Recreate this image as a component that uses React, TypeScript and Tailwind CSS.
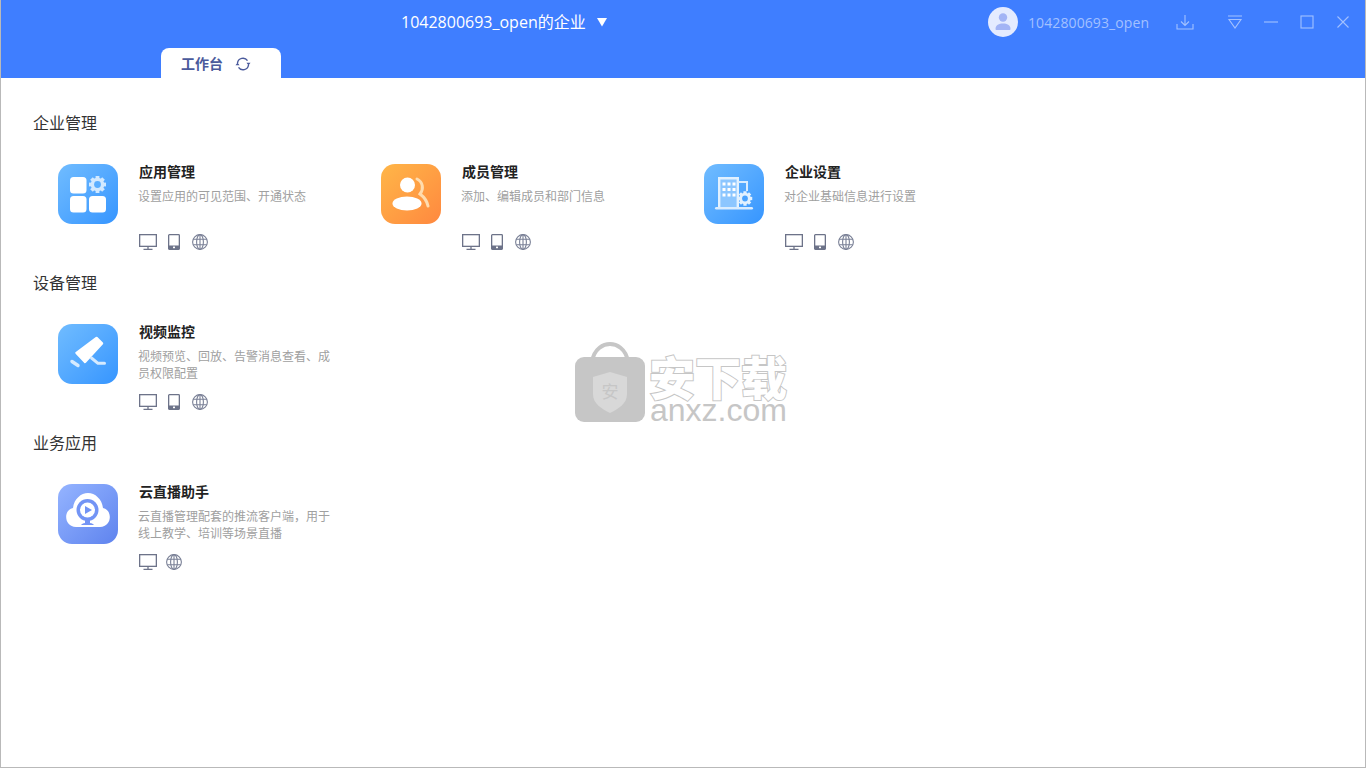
import React from "react";

const Monitor = () => (
  <svg width="18" height="16" viewBox="0 0 18 16" fill="none" stroke="#6d7389" strokeWidth="1.3">
    <rect x="0.65" y="0.65" width="16.7" height="11.7" />
    <path d="M9 12.5V15M4.500 15.350H13.500" />
  </svg>
);
const Tablet = () => (
  <svg className="ml-[11px]" width="12" height="16" viewBox="0 0 12 16" fill="none">
    <rect x="0.65" y="0.65" width="10.7" height="14.7" rx="0.8" stroke="#6d7389" strokeWidth="1.3" />
    <rect x="0.65" y="11.5" width="10.7" height="3.9" fill="#6d7389" />
    <rect x="5" y="12.6" width="2" height="1.6" fill="#fff" />
  </svg>
);
const Globe = ({ tablet }: { tablet: boolean }) => (
  <svg className={tablet ? "ml-[12px]" : "ml-[9px]"} width="16" height="16" viewBox="0 0 16 16" fill="none" stroke="#7a8096" strokeWidth="1.1">
    <circle cx="8" cy="8" r="7.4" />
    <ellipse cx="8" cy="8" rx="3.4" ry="7.4" />
    <path d="M8 .6V15.400M1.200 5.300H14.800M1.200 10.700H14.800" />
  </svg>
);

const gear = (cx: number, cy: number, r: number, color: string, hole: string) => (
  <g>
    {[0, 45, 90, 135].map((a) => (
      <rect key={a} x={cx - r * 0.28} y={cy - r * 1.25} width={r * 0.56} height={r * 2.5} fill={color} transform={`rotate(${a} ${cx} ${cy})`} />
    ))}
    <circle cx={cx} cy={cy} r={r} fill={color} />
    <circle cx={cx} cy={cy} r={r * 0.5} fill={hole} />
  </g>
);

const AppsIcon = () => (
  <svg width="60" height="60" viewBox="0 0 60 60">
    <rect x="12" y="13" width="16.500" height="16.500" rx="3.500" fill="#fff" />
    <rect x="12" y="32" width="16.500" height="16.500" rx="3.500" fill="#fff" />
    <rect x="31" y="32" width="17" height="16.500" rx="3.500" fill="#fff" />
    {gear(39.5, 20.5, 6.8, "#d2e9ff", "#5aaeff")}
  </svg>
);
const MembersIcon = () => (
  <svg width="60" height="60" viewBox="0 0 60 60">
    <path d="M36 15C42 18 43 25 39 30C43 33 46 37 47 42" fill="none" stroke="#ffdcae" strokeWidth="3" strokeLinecap="round" />
    <circle cx="26.500" cy="21" r="7.500" fill="#fff" />
    <ellipse cx="26" cy="39.500" rx="14.500" ry="7" fill="#fff" />
  </svg>
);
const BuildingIcon = () => (
  <svg width="60" height="60" viewBox="0 0 60 60">
    <rect x="11" y="43" width="38" height="2.400" rx="1.200" fill="#d9ecff" />
    <path d="M15.200 43V14.200H33.800V43" fill="#8cc6ff" stroke="#e2f1ff" strokeWidth="2.400" />
    <path d="M34 18H43V27" fill="none" stroke="#d9ecff" strokeWidth="2" />
    {[18.500, 24, 29.500].map((y) => [18.500, 23.500, 28.500].map((x) => <rect key={`${x}-${y}`} x={x} y={y} width="3" height="3" fill="#fff" />))}
    {gear(41, 34.500, 5.800, "#e2f1ff", "#4aa3ff")}
  </svg>
);
const CameraIcon = () => (
  <svg width="60" height="60" viewBox="0 0 60 60">
    <path d="M18.500 29L38.500 14L44 19.500L27 38z" fill="#fff" stroke="#fff" strokeWidth="2.500" strokeLinejoin="round" />
    <path d="M14 37.500L20 41.500" fill="none" stroke="#d5eaff" strokeWidth="3.400" strokeLinecap="round" />
    <path d="M33.500 34L40 39.300H46.500" fill="none" stroke="#d5eaff" strokeWidth="3" strokeLinecap="round" strokeLinejoin="round" />
  </svg>
);
const CloudIcon = () => (
  <svg width="60" height="60" viewBox="0 0 60 60">
    <path d="M18 43c-12 0-13-17-3-19c1-9 8-15 15-15s14 6 15 15c10 2 9 19-3 19z" fill="#fff" />
    <circle cx="29.500" cy="26" r="11" fill="#7394f5" />
    <circle cx="29.500" cy="26" r="7.500" fill="#fff" />
    <path d="M27 22l7 4-7 4z" fill="#7394f5" />
    <path d="M23 41c2-3 11-3 13 0z" fill="#7394f5" />
    <rect x="27" y="35" width="5" height="4" fill="#7394f5" />
  </svg>
);

type Item = { title: string; desc: string; bg: string; icon: React.ReactNode; tablet?: boolean };

const Card = ({ title, desc, bg, icon, tablet = true }: Item) => (
  <div className="flex w-[323px]">
    <div className={`h-[60px] w-[60px] shrink-0 rounded-[14px] ${bg}`}>{icon}</div>
    <div className="ml-[20px] w-[194px]">
      <div className="-mt-px ml-px h-[18px] text-[14px] leading-[18px] font-bold text-[#222222]">{title}</div>
      <div className="mt-[7px] h-[36px] text-[12px] leading-[17px] text-[#a0a0a0]">{desc}</div>
      <div className="ml-px mt-[10px] flex h-[16px] items-center">
        <Monitor />
        {tablet && <Tablet />}
        <Globe tablet={tablet} />
      </div>
    </div>
  </div>
);

const Section = ({ title, items }: { title: string; items: Item[] }) => (
  <section className="h-[160px]">
    <h2 className="ml-[32px] h-[20px] text-[16px] leading-[20px] font-normal text-[#333333]">{title}</h2>
    <div className="ml-[57px] mt-[31px] flex">
      {items.map((it) => (
        <Card key={it.title} {...it} />
      ))}
    </div>
  </section>
);

const blue = "bg-gradient-to-br from-[#70bcff] to-[#3595ff]";

export default function App() {
  return (
    <div
      className="relative flex h-[768px] w-[1366px] flex-col overflow-hidden border-x border-b border-[#b9b9b9] bg-white"
      style={{ fontFamily: '"Open Sans", "Noto Sans CJK SC", sans-serif' }}
    >
      <header className="h-[78px] shrink-0 bg-[#3f7eff]">
        <div className="flex h-[48px] items-center pb-[4px]">
          <div className="ml-[400px] flex items-center text-[16px] text-white">
            <span className="w-[185px] whitespace-nowrap">1042800693_open的企业</span>
            <svg className="ml-[10px]" width="12" height="9" viewBox="0 0 12 9"><path d="M1 0h10L6 8.500z" fill="#fff" /></svg>
          </div>
          <div className="ml-[380px] flex items-center">
            <svg width="30" height="30" viewBox="0 0 30 30">
              <circle cx="15" cy="15" r="15" fill="#e4ebff" />
              <circle cx="15" cy="10.500" r="4.200" fill="#a3b4f5" />
              <path d="M7.500 22c0-4 3.500-5.500 7.500-5.500s7.500 1.500 7.500 5.500c0 .8-.5 1-1 1H8.500c-.5 0-1-.2-1-1z" fill="#a3b4f5" />
            </svg>
            <span className="ml-[10px] w-[131px] whitespace-nowrap text-[14px] tracking-[0.1px] text-[#a3c1ff]">1042800693_open</span>
            <svg className="ml-[17px]" width="18" height="16" viewBox="0 0 18 16" fill="none" stroke="#a3c1ff" strokeWidth="1.100">
              <path d="M9 1v10M5 7.500l4 4 4-4M1 10v5h16v-5" />
            </svg>
            <svg className="ml-[33px]" width="16" height="14" viewBox="0 0 16 14" fill="none" stroke="#a3c1ff" strokeWidth="1.100">
              <path d="M1 1h14M2 4.500h12L8 13z" />
            </svg>
            <svg className="ml-[20px]" width="16" height="14" viewBox="0 0 16 14" fill="none" stroke="#a3c1ff" strokeWidth="1.100">
              <path d="M1 7h14" />
            </svg>
            <svg className="ml-[21px]" width="14" height="14" viewBox="0 0 14 14" fill="none" stroke="#a3c1ff" strokeWidth="1.100">
              <rect x="1" y="1" width="12" height="12" />
            </svg>
            <svg className="ml-[22px]" width="14" height="14" viewBox="0 0 14 14" fill="none" stroke="#a3c1ff" strokeWidth="1.100">
              <path d="M1.500 1.500l11 11M12.500 1.500l-11 11" />
            </svg>
          </div>
        </div>
        <div className="ml-[160px] flex h-[30px] w-[120px] items-center rounded-t-[8px] bg-white pl-[20px] pt-px">
          <span className="text-[14px] font-bold text-[#4a5a9c]">工作台</span>
          <svg className="ml-[12px]" width="16" height="14" viewBox="0 0 16 14" fill="none" stroke="#4a5a9c" strokeWidth="1.400">
            <path d="M2.500 6a5.500 5.500 0 0 1 10-2.300M13.500 8a5.500 5.500 0 0 1-10 2.300" />
            <path d="M11.500 5.800h4L13.500 8.600zM.5 8.200h4L2.500 5.400z" fill="#4a5a9c" stroke="none" />
          </svg>
        </div>
      </header>

      <main className="pt-[35px]">
        <Section
          title="企业管理"
          items={[
            { title: "应用管理", desc: "设置应用的可见范围、开通状态", bg: blue, icon: <AppsIcon /> },
            { title: "成员管理", desc: "添加、编辑成员和部门信息", bg: "bg-gradient-to-br from-[#ffb648] to-[#ff883f]", icon: <MembersIcon /> },
            { title: "企业设置", desc: "对企业基础信息进行设置", bg: blue, icon: <BuildingIcon /> },
          ]}
        />
        <Section
          title="设备管理"
          items={[{ title: "视频监控", desc: "视频预览、回放、告警消息查看、成员权限配置", bg: blue, icon: <CameraIcon /> }]}
        />
        <Section
          title="业务应用"
          items={[
            {
              title: "云直播助手",
              desc: "云直播管理配套的推流客户端，用于线上教学、培训等场景直播",
              bg: "bg-gradient-to-br from-[#95b4ff] to-[#5f83ee]",
              icon: <CloudIcon />,
              tablet: false,
            },
          ]}
        />
      </main>

      {/* watermark */}
      <div className="pointer-events-none absolute left-[573px] top-[342px] flex">
        <svg width="72" height="81" viewBox="0 0 72 81">
          <path d="M18 20C20 6 30 2 36 2s16 4 18 18" fill="none" stroke="#c6c6c6" strokeWidth="4" />
          <rect x="1" y="15" width="70" height="65" rx="9" fill="#c6c6c6" />
          <path d="M36 30l17 5v17c0 10-9 15-17 19-8-4-17-9-17-19V35z" fill="#d8d8d8" />
          <text x="36" y="56" textAnchor="middle" fontSize="17" fill="#c6c6c6" fontFamily="Noto Sans CJK SC">安</text>
        </svg>
        <div className="ml-[3px] flex flex-col pt-[12px]">
          <div className="h-[44px] whitespace-nowrap text-[46px] leading-[46px] font-black text-white [-webkit-text-stroke:2px_#c6c6c6] [paint-order:stroke_fill]">安下载</div>
          <div className="ml-px h-[24px] whitespace-nowrap text-[32px] leading-[24px] text-[#c6c6c6]" style={{ fontFamily: '"Liberation Sans", sans-serif' }}>anxz.com</div>
        </div>
      </div>
    </div>
  );
}
